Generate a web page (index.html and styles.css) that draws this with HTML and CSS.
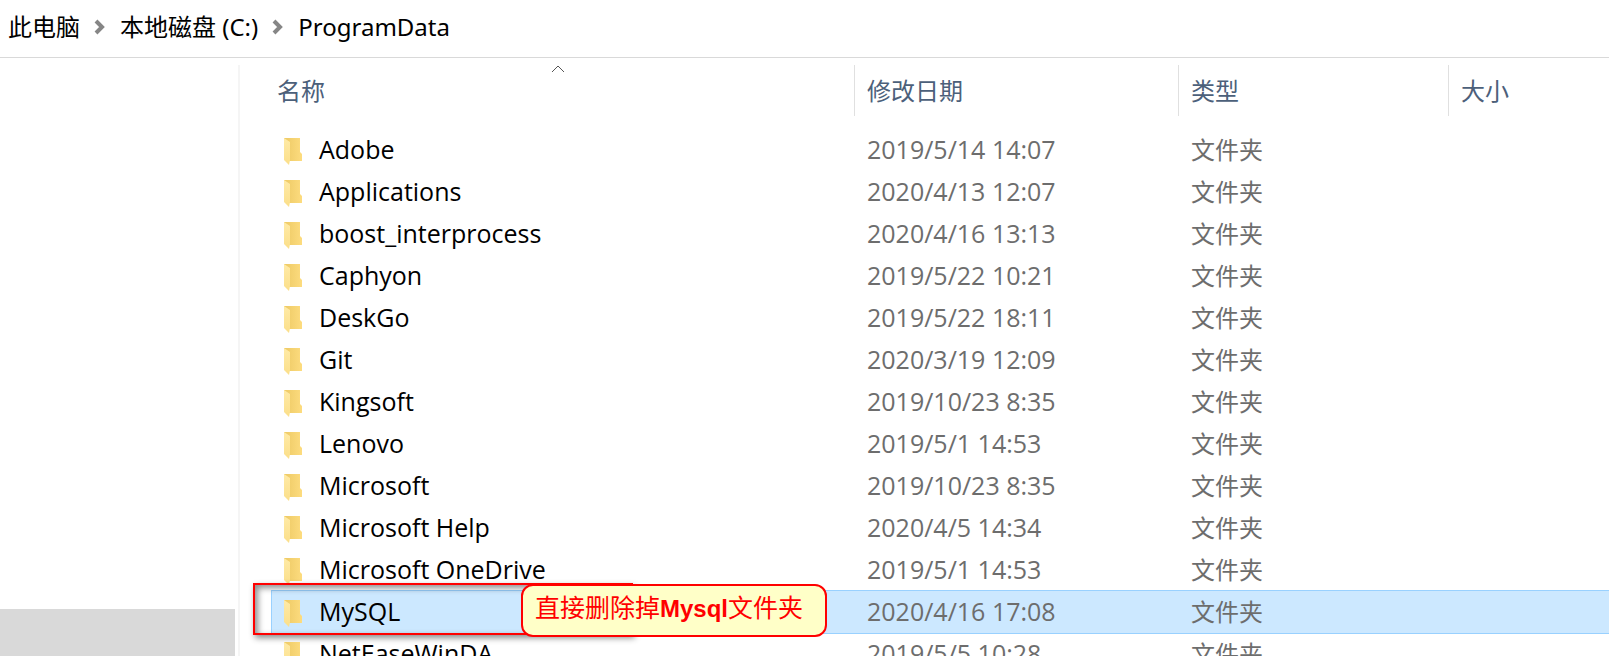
FILE: index.html
```html
<!DOCTYPE html>
<html lang="zh-CN">
<head>
<meta charset="utf-8">
<title>ProgramData</title>
<link rel="stylesheet" href="styles.css">
</head>
<body>
<svg class="defs" aria-hidden="true">
  <defs>
    <linearGradient id="back" x1="0" y1="0" x2="1" y2="0">
      <stop offset="0" stop-color="#edc964"/><stop offset="1" stop-color="#fddc7f"/>
    </linearGradient>
    <linearGradient id="flap" x1="0" y1="0" x2="0" y2="1">
      <stop offset="0" stop-color="#ffeaa6"/><stop offset="1" stop-color="#fbdf8a"/>
    </linearGradient>
    <symbol id="folder" viewBox="0 0 19 27">
      <path d="M0 0H16V14L18 16V23H5L0 20Z" fill="url(#back)"/>
      <path d="M0 0L6 4V22L5 27L0 22Z" fill="url(#flap)"/>
    </symbol>
    <symbol id="chevron" viewBox="0 0 12 16">
      <path d="M2 2L8 8L2 14" fill="none" stroke="#868686" stroke-width="4"/>
    </symbol>
  </defs>
</svg>
<div class="window">
  <nav class="breadcrumb" aria-label="路径">
    <a href="#pc">此电脑</a>
    <svg class="chevron" aria-hidden="true"><use href="#chevron"/></svg>
    <a href="#c">本地磁盘 (C:)</a>
    <svg class="chevron" aria-hidden="true"><use href="#chevron"/></svg>
    <a href="#programdata">ProgramData</a>
  </nav>
  <div class="content">
    <aside class="sidebar"><div class="sidebar-item"></div></aside>
    <main class="files">
      <table class="list">
        <colgroup><col class="col-name"><col class="col-date"><col class="col-type"><col></colgroup>
        <thead>
          <tr>
            <th scope="col">名称<svg class="sort" viewBox="0 0 14 8" aria-hidden="true"><path d="M1 7L7 1L13 7" fill="none" stroke="#555" stroke-width="1"/></svg></th>
            <th scope="col">修改日期</th><th scope="col">类型</th><th scope="col">大小</th>
          </tr>
        </thead>
        <tbody>
          <tr><td><svg class="folder"><use href="#folder"/></svg>Adobe</td><td>2019/5/14 14:07</td><td>文件夹</td><td></td></tr>
          <tr><td><svg class="folder"><use href="#folder"/></svg>Applications</td><td>2020/4/13 12:07</td><td>文件夹</td><td></td></tr>
          <tr><td><svg class="folder"><use href="#folder"/></svg>boost_interprocess</td><td>2020/4/16 13:13</td><td>文件夹</td><td></td></tr>
          <tr><td><svg class="folder"><use href="#folder"/></svg>Caphyon</td><td>2019/5/22 10:21</td><td>文件夹</td><td></td></tr>
          <tr><td><svg class="folder"><use href="#folder"/></svg>DeskGo</td><td>2019/5/22 18:11</td><td>文件夹</td><td></td></tr>
          <tr><td><svg class="folder"><use href="#folder"/></svg>Git</td><td>2020/3/19 12:09</td><td>文件夹</td><td></td></tr>
          <tr><td><svg class="folder"><use href="#folder"/></svg>Kingsoft</td><td>2019/10/23 8:35</td><td>文件夹</td><td></td></tr>
          <tr><td><svg class="folder"><use href="#folder"/></svg>Lenovo</td><td>2019/5/1 14:53</td><td>文件夹</td><td></td></tr>
          <tr><td><svg class="folder"><use href="#folder"/></svg>Microsoft</td><td>2019/10/23 8:35</td><td>文件夹</td><td></td></tr>
          <tr><td><svg class="folder"><use href="#folder"/></svg>Microsoft Help</td><td>2020/4/5 14:34</td><td>文件夹</td><td></td></tr>
          <tr><td><svg class="folder"><use href="#folder"/></svg>Microsoft OneDrive</td><td>2019/5/1 14:53</td><td>文件夹</td><td></td></tr>
          <tr class="selected"><td><svg class="folder"><use href="#folder"/></svg>MySQL<div class="frame"></div><div class="callout">直接删除掉<b>Mysql</b>文件夹</div></td><td>2020/4/16 17:08</td><td>文件夹</td><td></td></tr>
          <tr><td><svg class="folder"><use href="#folder"/></svg>NetEaseWinDA</td><td>2019/5/5 10:28</td><td>文件夹</td><td></td></tr>
        </tbody>
      </table>
    </main>
  </div>
</div>
</body>
</html>
```
FILE: styles.css
```css
* { box-sizing: border-box; }

body {
  margin: 0;
  background: #fff;
  color: #000;
  font: 24px/42px "Open Sans", "Noto Sans CJK SC", sans-serif;
}

.defs { position: absolute; width: 0; height: 0; }

.window {
  display: flex;
  flex-direction: column;
  height: 100vh;
  overflow: hidden;
}

.breadcrumb {
  display: flex;
  flex: none;
  align-items: center;
  gap: 14px;
  padding: 6px 8px 9px;
  border-bottom: 1px solid #d9d9d9;
  font-family: "Noto Sans", "Noto Sans CJK SC", sans-serif;
}

.breadcrumb a { color: inherit; text-decoration: none; }

.chevron { width: 12px; height: 16px; }

.content {
  display: flex;
  flex: 1;
  min-height: 0;
  padding-top: 7px;
}

.sidebar {
  display: flex;
  flex: none;
  flex-direction: column;
  justify-content: flex-end;
  width: 240px;
  padding-right: 3px;
  border-right: 2px solid #f5f5f5;
}

.sidebar-item { height: 47px; background: #d9d9d9; }

.files { flex: 1; min-width: 0; padding-left: 31px; }

.list {
  width: 100%;
  table-layout: fixed;
  border-collapse: separate;
  border-spacing: 0;
}

.col-name { width: 583px; }
.col-date { width: 324px; }
.col-type { width: 270px; }

.list th {
  position: relative;
  height: 51px;
  padding: 0 0 0 12px;
  border-left: 1px solid #e0e0e0;
  color: #4c607a;
  font-weight: 400;
  line-height: 51px;
  text-align: left;
}

.list th:first-child { padding-left: 6px; border-left: 0; }

.sort {
  position: absolute;
  top: 0;
  left: 48%;
  width: 14px;
  height: 8px;
}

.list tbody::before { content: ""; display: block; height: 13px; }

.list td {
  height: 42px;
  padding: 0 0 2px 13px;
  color: #6d6d6d;
  font-size: 25px;
  line-height: 40px;
  white-space: nowrap;
}

.list td:nth-child(3) { padding-bottom: 0; font-size: 24px; }

.list td:first-child { position: relative; padding-left: 13px; color: #000; }

.folder {
  width: 19px;
  height: 27px;
  margin: 0 16px 2px 0;
  vertical-align: middle;
}

.selected td {
  background: #cce8ff;
  box-shadow: 0 -1px #99d1ff, 0 1px #99d1ff;
}

.selected td:first-child { box-shadow: 0 -1px #99d1ff, 0 1px #99d1ff, inset 1px 0 #99d1ff; }

.frame {
  position: absolute;
  top: -8px;
  left: -18px;
  width: 380px;
  height: 52px;
  border: 2px solid #f00;
  box-shadow: 2px 3px 6px rgba(0, 0, 0, .45), inset 3px 3px 6px rgba(0, 0, 0, .45);
}

.callout {
  position: absolute;
  top: -7px;
  left: 250px;
  height: 53px;
  padding: 0 22px 0 12px;
  border: 2px solid #f00;
  border-radius: 12px;
  background: #ffffc8;
  color: #f00;
  font: 25px/44px "Liberation Sans", "Noto Sans CJK SC", sans-serif;
}

.callout b { font-size: 24px; }
```
